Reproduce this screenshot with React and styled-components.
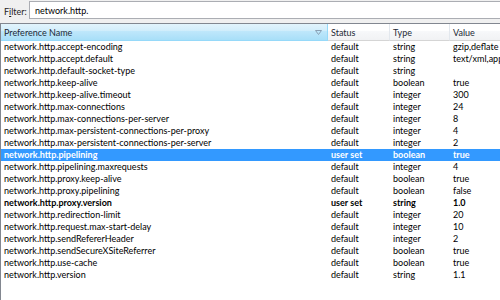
import React from "react";
import styled, { createGlobalStyle } from "styled-components";

const GlobalStyle = createGlobalStyle`
  html, body {
    margin: 0;
    padding: 0;
    width: 500px;
    height: 300px;
    overflow: hidden;
    background: #f0f0f0;
  }
  body {
    font-family: Lato, "Open Sans", sans-serif;
    font-size: 9px;
    color: #000;
  }
`;

const Window = styled.div`
  display: flex;
  flex-direction: column;
  width: 500px;
  height: 300px;
  background: #f0f0f0;
`;

const FilterBar = styled.div`
  display: flex;
  align-items: center;
  height: 22px;
  padding: 0 0 0 4px;
  gap: 6px;
`;

const FilterLabel = styled.label`
  font-size: 9px;
  color: #1e1e1e;
  width: 19px;

  u {
    text-decoration: underline;
  }
`;

const FilterInput = styled.div`
  flex: 1;
  height: 16px;
  margin-top: -2px;
  border: 1px solid #abadb3;
  border-right: none;
  background: #fff;
  display: flex;
  align-items: center;
  padding-left: 5px;
  font-size: 9px;
`;

const Tree = styled.div`
  flex: 1;
  margin-top: 1px;
  border: 1px solid #828790;
  border-right: none;
  border-bottom: none;
  background: #fff;
  overflow: hidden;
`;

const cols = "327px 62px 60px 120px";

const HeaderRow = styled.div`
  display: grid;
  grid-template-columns: ${cols};
  height: 17px;
`;

const HeaderCell = styled.div`
  display: flex;
  align-items: center;
  justify-content: space-between;
  padding: 0 5px 0 ${(p) => p.$pad || 3}px;
  font-size: 9px;
  color: #1e2a36;
  box-sizing: border-box;
  border-right: 1px solid ${(p) => (p.$sorted ? "#96d9f9" : "#e3e8ee")};
  border-bottom: 1px solid ${(p) => (p.$sorted ? "#96d9f9" : "#d5d5d5")};
  background: ${(p) =>
    p.$sorted
      ? "linear-gradient(#e2f4fc 0%, #d3eefb 40%, #bfe7fb 45%, #a8dff8 100%)"
      : "linear-gradient(#ffffff 0%, #ffffff 40%, #f7f8fa 45%, #f1f2f4 100%)"};
`;

const SortArrow = styled.svg`
  width: 7px;
  height: 5px;
`;

const Row = styled.div`
  display: grid;
  grid-template-columns: ${cols};
  height: 12px;
  line-height: 12px;
  background: ${(p) => (p.$selected ? "#3399ff" : "transparent")};
  color: ${(p) => (p.$selected ? "#fff" : "#000")};
  font-weight: ${(p) => (p.$bold ? 700 : 400)};
`;

const Cell = styled.div`
  padding-left: 3px;
  white-space: nowrap;
  overflow: hidden;
  font-size: 9px;
`;

const prefs = [
  ["network.http.accept-encoding", "default", "string", "gzip,deflate"],
  ["network.http.accept.default", "default", "string", "text/xml,application/xml"],
  ["network.http.default-socket-type", "default", "string", ""],
  ["network.http.keep-alive", "default", "boolean", "true"],
  ["network.http.keep-alive.timeout", "default", "integer", "300"],
  ["network.http.max-connections", "default", "integer", "24"],
  ["network.http.max-connections-per-server", "default", "integer", "8"],
  ["network.http.max-persistent-connections-per-proxy", "default", "integer", "4"],
  ["network.http.max-persistent-connections-per-server", "default", "integer", "2"],
  ["network.http.pipelining", "user set", "boolean", "true", true],
  ["network.http.pipelining.maxrequests", "default", "integer", "4"],
  ["network.http.proxy.keep-alive", "default", "boolean", "true"],
  ["network.http.proxy.pipelining", "default", "boolean", "false"],
  ["network.http.proxy.version", "user set", "string", "1.0"],
  ["network.http.redirection-limit", "default", "integer", "20"],
  ["network.http.request.max-start-delay", "default", "integer", "10"],
  ["network.http.sendRefererHeader", "default", "integer", "2"],
  ["network.http.sendSecureXSiteReferrer", "default", "boolean", "true"],
  ["network.http.use-cache", "default", "boolean", "true"],
  ["network.http.version", "default", "string", "1.1"],
];

export default function App() {
  return (
    <>
      <GlobalStyle />
      <Window>
        <FilterBar>
          <FilterLabel>
            F<u>i</u>lter:
          </FilterLabel>
          <FilterInput>network.http.</FilterInput>
        </FilterBar>
        <Tree>
          <HeaderRow>
            <HeaderCell $sorted>
              Preference Name
              <SortArrow viewBox="0 0 7 5">
                <path d="M0.5 0.5 H6.5 L3.5 4.5 Z" fill="none" stroke="#8aa0b4" strokeWidth="1" />
              </SortArrow>
            </HeaderCell>
            <HeaderCell>Status</HeaderCell>
            <HeaderCell>Type</HeaderCell>
            <HeaderCell>Value</HeaderCell>
          </HeaderRow>
          {prefs.map(([name, status, type, value, selected]) => (
            <Row key={name} $selected={selected} $bold={status === "user set"}>
              <Cell>{name}</Cell>
              <Cell>{status}</Cell>
              <Cell>{type}</Cell>
              <Cell>{value}</Cell>
            </Row>
          ))}
        </Tree>
      </Window>
    </>
  );
}
